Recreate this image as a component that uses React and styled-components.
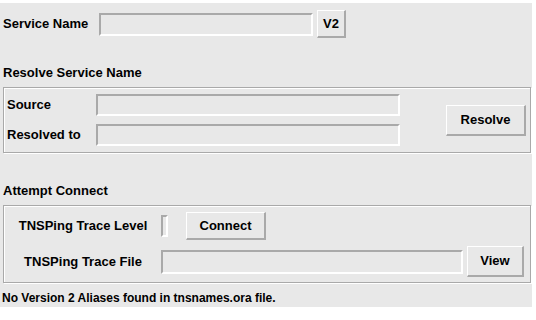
import React from "react";
import styled, { createGlobalStyle } from "styled-components";

const GlobalStyle = createGlobalStyle`
  body {
    margin: 0;
    background: #ffffff;
    font-family: "Liberation Sans", Arial, sans-serif;
  }
`;

const Panel = styled.div`
  margin-top: 3px;
  width: 532px;
  height: 304px;
  background: #e8e8e8;
  padding-top: 7px;
  box-sizing: border-box;
  font-size: 13px;
  font-weight: bold;
  color: #000;
`;

const TopRow = styled.div`
  display: flex;
  align-items: center;
  height: 28px;
  padding-left: 3px;
`;

const Label = styled.div`
  width: ${props => props.width || "auto"};
  text-align: ${props => (props.center ? "center" : "left")};
  line-height: 16px;
  white-space: nowrap;
  flex-shrink: 0;
`;

const Field = styled.div`
  box-sizing: border-box;
  width: ${props => props.width};
  height: ${props => props.height || "22px"};
  background: #e8e8e8;
  border-style: solid;
  border-width: 2px;
  border-color: #a9a9a9 #ffffff #ffffff #a9a9a9;
  flex-shrink: 0;
`;

const Button = styled.div`
  box-sizing: border-box;
  display: flex;
  align-items: center;
  justify-content: center;
  width: ${props => props.width};
  height: ${props => props.height};
  margin-left: ${props => props.gap || "4px"};
  background: #e8e8e8;
  border-style: solid;
  border-width: 1px 2px 2px 1px;
  border-color: #ffffff #a9a9a9 #a9a9a9 #ffffff;
  flex-shrink: 0;
  padding-bottom: 1px;
`;

const SectionTitle = styled.div`
  line-height: 16px;
  padding-left: 3px;
  margin-top: ${props => props.top};
  margin-bottom: 6px;
`;

const Group = styled.div`
  box-sizing: border-box;
  width: 528px;
  margin-left: 3px;
  border: 1px solid #a9a9a9;
  box-shadow: inset 1px 1px 0 #ffffff, 1px 1px 0 #ffffff;
`;

const ResolveGroup = styled(Group)`
  display: grid;
  grid-template-columns: 89px 304px 1fr;
  grid-template-rows: 22px 22px;
  row-gap: 8px;
  padding: 6px 0 6px 3px;
  align-items: center;
`;

const ResolveCell = styled.div`
  grid-column: 3;
  grid-row: 1 / span 2;
  display: flex;
  align-items: center;
  padding-top: 1px;
`;

const ConnectGroup = styled(Group)`
  display: flex;
  flex-direction: column;
  gap: 6px;
  padding: 6px 0 5px 1px;
`;

const ConnectRow = styled.div`
  display: flex;
  align-items: center;
  height: ${props => props.height};
`;

const Status = styled.div`
  line-height: 16px;
  padding-left: 2px;
  margin-top: 7px;
  font-size: 12px;
`;

export default function App() {
  return (
    <>
      <GlobalStyle />
      <Panel>
        <TopRow>
          <Label width="96px">Service Name</Label>
          <Field width="214px" height="23px" />
          <Button width="29px" height="28px">V2</Button>
        </TopRow>

        <SectionTitle top="27px">Resolve Service Name</SectionTitle>
        <ResolveGroup>
          <Label>Source</Label>
          <Field width="304px" />
          <ResolveCell>
            <Button width="80px" height="31px" gap="46px">Resolve</Button>
          </ResolveCell>
          <Label>Resolved to</Label>
          <Field width="304px" />
        </ResolveGroup>

        <SectionTitle top="30px">Attempt Connect</SectionTitle>
        <ConnectGroup>
          <ConnectRow height="28px">
            <Label width="156px" center>TNSPing Trace Level</Label>
            <Field width="7px" />
            <Button width="80px" height="28px" gap="18px">Connect</Button>
          </ConnectRow>
          <ConnectRow height="31px">
            <Label width="156px" center>TNSPing Trace File</Label>
            <Field width="302px" height="24px" />
            <Button width="57px" height="31px">View</Button>
          </ConnectRow>
        </ConnectGroup>

        <Status>No Version 2 Aliases found in tnsnames.ora file.</Status>
      </Panel>
    </>
  );
}
